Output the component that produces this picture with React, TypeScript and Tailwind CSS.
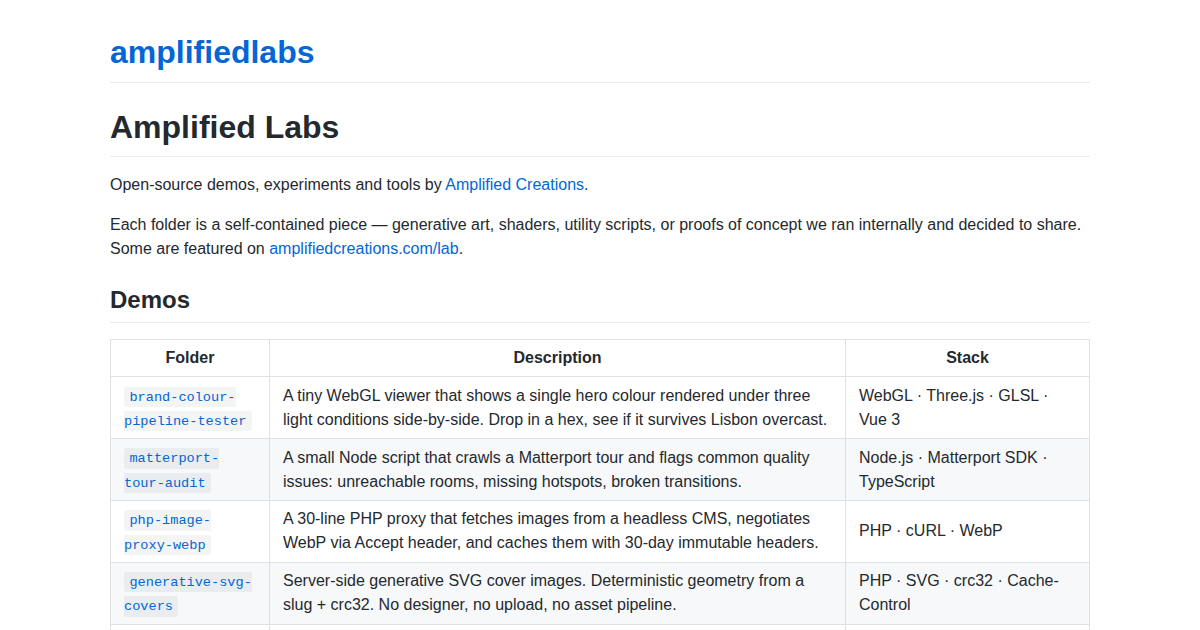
import React from "react";

const rows = [
  {
    folder: ["brand-colour-", "pipeline-tester"],
    desc: "A tiny WebGL viewer that shows a single hero colour rendered under three light conditions side-by-side. Drop in a hex, see if it survives Lisbon overcast.",
    stack: "WebGL · Three.js · GLSL · Vue 3",
  },
  {
    folder: ["matterport-", "tour-audit"],
    desc: "A small Node script that crawls a Matterport tour and flags common quality issues: unreachable rooms, missing hotspots, broken transitions.",
    stack: "Node.js · Matterport SDK · TypeScript",
  },
  {
    folder: ["php-image-", "proxy-webp"],
    desc: "A 30-line PHP proxy that fetches images from a headless CMS, negotiates WebP via Accept header, and caches them with 30-day immutable headers.",
    stack: "PHP · cURL · WebP",
  },
  {
    folder: ["generative-svg-", "covers"],
    desc: "Server-side generative SVG cover images. Deterministic geometry from a slug + crc32. No designer, no upload, no asset pipeline.",
    stack: "PHP · SVG · crc32 · Cache-Control",
  },
  {
    folder: ["shader-", "playground"],
    desc: "A collection of fragment shaders we use for hero backgrounds and loading states, with a tiny live-reload harness.",
    stack: "GLSL · Vite",
  },
];

export default function App() {
  return (
    <div
      className="min-h-screen bg-white text-[#24292e] text-[16px] leading-[1.5]"
      style={{ fontFamily: '"Liberation Sans", Arial, Helvetica, sans-serif' }}
    >
      <div className="mx-auto w-[980px] pt-[32px]">
        <h1 className="text-[32px] font-bold leading-[1.25] pb-[9.6px] border-b border-[#eaecef] mb-[16px]">
          <a className="text-[#0366d6]">amplifiedlabs</a>
        </h1>
        <h1 className="text-[32px] font-bold leading-[1.25] pb-[9.6px] border-b border-[#eaecef] mt-[24px] mb-[16px]">
          Amplified Labs
        </h1>
        <p className="mb-[16px]">
          Open-source demos, experiments and tools by{" "}
          <a className="text-[#0366d6]">Amplified Creations</a>.
        </p>
        <p className="mb-[16px]">
          Each folder is a self-contained piece — generative art, shaders, utility scripts, or proofs of concept we ran internally and decided to share. Some are featured on{" "}
          <a className="text-[#0366d6]">amplifiedcreations.com/lab</a>.
        </p>
        <h2 className="text-[24px] font-bold leading-[1.25] pb-[7.2px] border-b border-[#eaecef] mt-[24px] mb-[16px]">
          Demos
        </h2>
        <table className="w-[980px] border-collapse table-fixed">
          <colgroup>
            <col className="w-[159px]" />
            <col className="w-[576px]" />
            <col />
          </colgroup>
          <thead>
            <tr className="bg-white border-t border-[#c6cbd1]">
              <th className="border border-[#dfe2e5] px-[13px] py-[6px] font-bold text-center">Folder</th>
              <th className="border border-[#dfe2e5] px-[13px] py-[6px] font-bold text-center">Description</th>
              <th className="border border-[#dfe2e5] px-[13px] py-[6px] font-bold text-center">Stack</th>
            </tr>
          </thead>
          <tbody>
            {rows.map((r, i) => (
              <tr key={i} className={i % 2 === 1 ? "bg-[#f6f8fa]" : "bg-white"}>
                <td className="border border-[#dfe2e5] px-[13px] py-[6px] align-middle">
                  <a className="text-[#0366d6]">
                    <code
                      className="text-[13.6px] px-[5.44px] py-[2.72px] rounded-[3px] bg-[rgba(27,31,35,0.05)] break-words"
                      style={{ fontFamily: '"Liberation Mono", "DejaVu Sans Mono", Consolas, monospace' }}
                    >
                      {r.folder.join("")}
                    </code>
                  </a>
                </td>
                <td className="border border-[#dfe2e5] px-[13px] py-[6px] align-middle">{r.desc}</td>
                <td className="border border-[#dfe2e5] px-[13px] py-[6px] align-middle">{r.stack}</td>
              </tr>
            ))}
          </tbody>
        </table>
      </div>
    </div>
  );
}
